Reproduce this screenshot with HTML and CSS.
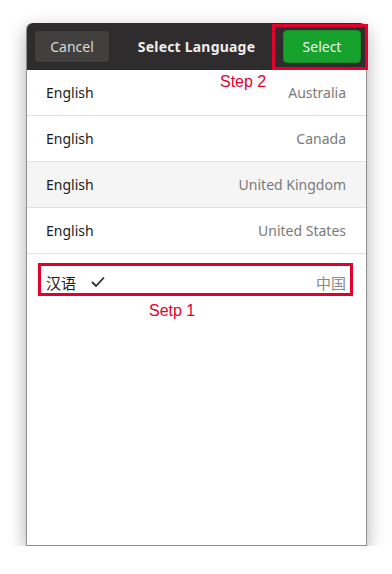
FILE: index.html
```html
<!DOCTYPE html>
<html lang="en">
<head>
  <title>Select Language</title>
  <meta charset="UTF-8" />
  <meta name="viewport" content="width=device-width" />
  <link rel="stylesheet" href="styles.css">
</head>
<body>
  <div class="dialog">
    <div class="header">
      <button class="btn cancel">Cancel</button>
      <div class="title">Select Language</div>
      <button class="btn select">Select</button>
    </div>
    <ul class="list">
      <li class="row"><span class="lang">English</span><span class="region">Australia</span></li>
      <li class="row"><span class="lang">English</span><span class="region">Canada</span></li>
      <li class="row hover"><span class="lang">English</span><span class="region">United Kingdom</span></li>
      <li class="row"><span class="lang">English</span><span class="region">United States</span></li>
      <li class="row chosen">
        <span class="lang">汉语</span>
        <svg class="check" width="14" height="12" viewBox="0 0 14 12">
          <path d="M1 6 L5 10 L13 1.5" fill="none" stroke="#2a2a2a" stroke-width="1.8"/>
        </svg>
        <span class="region cjk">中国</span>
      </li>
    </ul>

    <!-- annotations -->
    <div class="mark mark-select"></div>
    <div class="note note-2">Step 2</div>
    <div class="mark mark-row"></div>
    <div class="note note-1">Setp 1</div>
  </div>
</body>
</html>
```

FILE: styles.css
```css
body {
  margin: 0;
  background: #ffffff;
  font-family: "Noto Sans", "Noto Sans CJK SC", sans-serif;
}

.dialog {
  position: relative;
  box-sizing: border-box;
  width: 341px;
  height: 523px;
  margin: 23px 0 0 26px;
  border: 1px solid #8e8e8e;
  border-top: none;
  border-radius: 6px 6px 0 0;
  background: #ffffff;
  box-shadow: 0 6px 18px rgba(0, 0, 0, 0.32);
}

.header {
  display: flex;
  align-items: center;
  height: 47px;
  padding: 0 5px 0 7px;
  background: #2e2c2c;
  border-radius: 6px 6px 0 0;
}

.btn {
  height: 33px;
  border-radius: 4px;
  font-family: inherit;
  font-size: 14px;
  padding: 0;
}

.cancel {
  width: 76px;
  background: #42403f;
  border: 1px solid #2a2828;
  color: #d8d8d8;
}

.select {
  width: 78px;
  background: #17a22d;
  border: 1px solid #138a26;
  color: #f2f2f2;
}

.title {
  flex: 1;
  text-align: center;
  color: #eeeeee;
  font-weight: bold;
  font-size: 14px;
  letter-spacing: 0.2px;
}

.list {
  list-style: none;
  margin: 0;
  padding: 0;
}

.row {
  display: flex;
  align-items: center;
  height: 45px;
  padding: 0 20px 0 19px;
  border-bottom: 1px solid #e1e1e1;
  font-size: 14px;
}

.row.hover {
  background: #f5f5f5;
}

.row.chosen {
  border-bottom: none;
  height: 52px;
  padding-top: 2px;
  font-size: 15px;
}

.lang {
  color: #1b1b1b;
}

.region {
  margin-left: auto;
  color: #7a7a7a;
}

.region.cjk {
  color: #8a8a8a;
}

.check {
  margin-left: 15px;
}

.mark {
  position: absolute;
  border: 3px solid #e3002a;
  box-sizing: border-box;
}

.mark-select {
  left: 245px;
  top: 1px;
  width: 96px;
  height: 46px;
}

.mark-row {
  left: 11px;
  top: 240px;
  width: 315px;
  height: 33px;
}

.note {
  position: absolute;
  color: #e3002a;
  font-family: "Liberation Sans", sans-serif;
  font-size: 16px;
}

.note-2 {
  left: 193px;
  top: 50px;
}

.note-1 {
  left: 122px;
  top: 279px;
}
```
